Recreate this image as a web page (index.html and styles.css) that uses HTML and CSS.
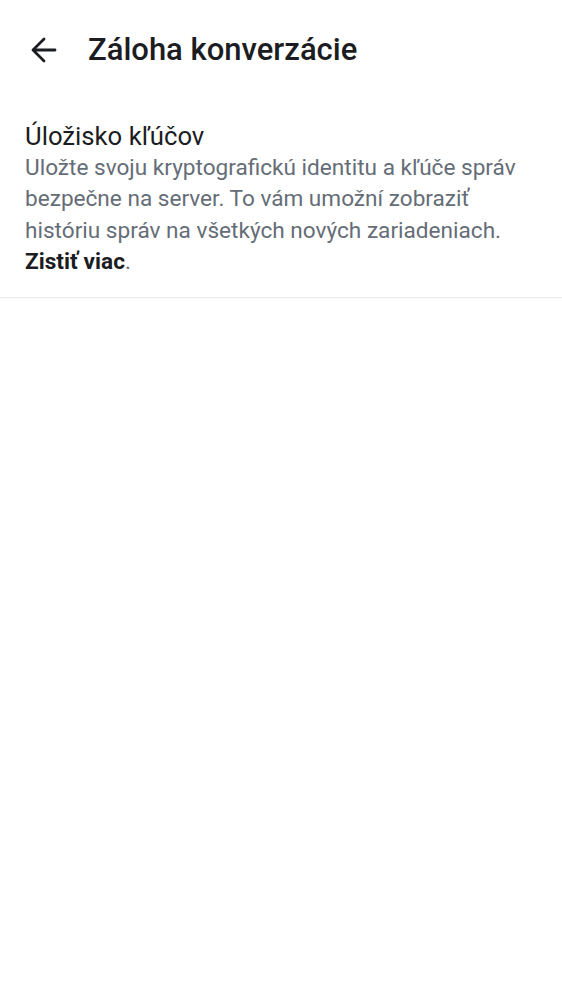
FILE: index.html
```html
<!DOCTYPE html>
<html lang="sk">
<head>
<meta charset="utf-8">
<link rel="stylesheet" href="styles.css">
</head>
<body>
<header class="topbar">
  <button class="back" aria-label="Späť">
    <svg width="28" height="28" viewBox="0 0 28 28"><path d="M4 14H26M15 3L4 14L15 25" fill="none" stroke="#1b1d22" stroke-width="2.8" stroke-linecap="round" stroke-linejoin="round"/></svg>
  </button>
  <h1 class="title">Záloha konverzácie</h1>
</header>
<section class="item">
  <h2 class="item-title">Úložisko kľúčov</h2>
  <p class="item-desc">Uložte svoju kryptografickú identitu a kľúče správ bezpečne na server. To vám umožní zobraziť históriu správ na všetkých nových zariadeniach. <b class="link">Zistiť viac</b>.</p>
</section>
</body>
</html>
```
FILE: styles.css
```css
html, body { margin: 0; padding: 0; background: #fff; }
body { font-family: Roboto, "Noto Sans", sans-serif; color: #1b1d22; }
.topbar { display: flex; align-items: center; height: 100px; padding-left: 15px; }
.back { width: 56px; height: 56px; border: 0; background: none; padding: 0; display: flex; align-items: center; justify-content: center; margin-right: 17px; }
.title { margin: 0; font-size: 31px; font-weight: 500; line-height: 40px; }
.item { padding: 20px 25px 20px; border-bottom: 1px solid #ebebeb; }
.item-title { margin: 0; font-size: 25.7px; font-weight: 400; line-height: 32px; }
.item-desc { margin: 0; font-size: 22.6px; line-height: 31.3px; color: #656d77; }
.link { color: #1b1d22; font-weight: 700; }
```
